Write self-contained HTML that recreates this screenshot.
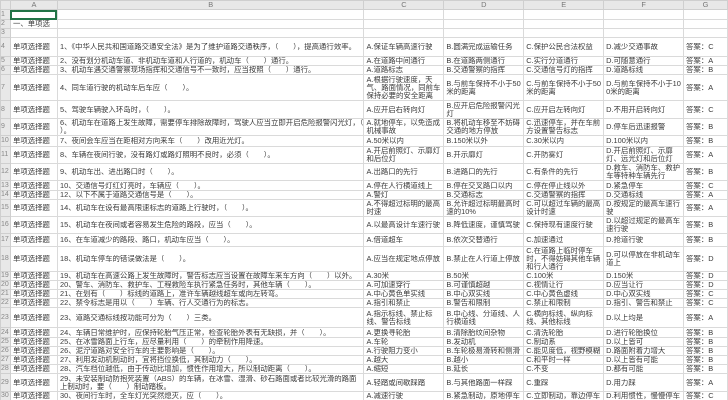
<!DOCTYPE html>
<html><head><meta charset="utf-8"><style>
html,body{margin:0;padding:0;background:#fff;width:728px;height:400px;overflow:hidden}
table{border-collapse:collapse;table-layout:fixed;font-family:"Liberation Sans","Noto Sans CJK SC",sans-serif;font-size:7.4px;line-height:8px;color:#3a3a3a}
td{border:1px solid #dadada;padding:0 0 0 2px;overflow:hidden;vertical-align:middle;word-break:break-all}
td>div{max-height:var(--h);overflow:hidden}
tr.hd td{background:#e8e8e8;color:#777;text-align:center;padding:0;border-color:#cfcfcf}
td.n{background:#e8e8e8;color:#888;padding:0;text-align:left;font-size:7px;border-color:#cfcfcf}
td.sel{outline:2px solid #217346;outline-offset:-2px}
</style></head><body>
<table>
<colgroup><col style="width:10px"><col style="width:47px"><col style="width:307px"><col style="width:80px"><col style="width:80px"><col style="width:80px"><col style="width:80px"><col style="width:44px"></colgroup>
<tr class="hd" style="height:9px;--h:8px"><td></td><td>A</td><td>B</td><td>C</td><td>D</td><td>E</td><td>F</td><td>G</td></tr>
<tr style="height:10px;--h:8px"><td class="n">1</td><td class="sel"></td><td></td><td></td><td></td><td></td><td></td><td></td></tr>
<tr style="height:8px;--h:8px"><td class="n">2</td><td style="white-space:nowrap">一、单项选</td><td></td><td></td><td></td><td></td><td></td><td></td></tr>
<tr style="height:7px;--h:6px"><td class="n">3</td><td></td><td></td><td></td><td></td><td></td><td></td><td></td></tr>
<tr style="height:19px;--h:17px"><td class="n">4</td><td><div>单项选择题</div></td><td><div>1、《中华人民共和国道路交通安全法》是为了维护道路交通秩序，（　　），提高通行效率。</div></td><td><div>A.保证车辆高速行驶</div></td><td><div>B.圆满完成运输任务</div></td><td><div>C.保护公民合法权益</div></td><td><div>D.减少交通事故</div></td><td><div>答案：C</div></td></tr>
<tr style="height:9px;--h:8px"><td class="n">5</td><td><div>单项选择题</div></td><td><div>2、没有划分机动车道、非机动车道和人行道的，机动车（　　）通行。</div></td><td><div>A.在道路中间通行</div></td><td><div>B.在道路两侧通行</div></td><td><div>C.实行分道通行</div></td><td><div>D.可随意通行</div></td><td><div>答案：A</div></td></tr>
<tr style="height:9px;--h:8px"><td class="n">6</td><td><div>单项选择题</div></td><td><div>3、机动车遇交通警察现场指挥和交通信号不一致时，应当按照（　　）通行。</div></td><td><div>A.道路标志</div></td><td><div>B.交通警察的指挥</div></td><td><div>C.交通信号灯的指挥</div></td><td><div>D.道路标线</div></td><td><div>答案：B</div></td></tr>
<tr style="height:26px;--h:24px"><td class="n">7</td><td><div>单项选择题</div></td><td><div>4、同车道行驶的机动车后车应（　　）。</div></td><td><div>A.根据行驶速度，天气、路面情况，同前车保持必要的安全距离</div></td><td><div>B.与前车保持不小于50米的距离</div></td><td><div>C.与前车保持不小于50米的距离</div></td><td><div>D.与前车保持不小于100米的距离</div></td><td><div>答案：A</div></td></tr>
<tr style="height:18px;--h:16px"><td class="n">8</td><td><div>单项选择题</div></td><td><div>5、驾驶车辆驶入环岛时，（　　）。</div></td><td><div>A.应开启右转向灯</div></td><td><div>B.应开启危险报警闪光灯</div></td><td><div>C.应开启左转向灯</div></td><td><div>D.不用开启转向灯</div></td><td><div>答案：C</div></td></tr>
<tr style="height:17px;--h:16px"><td class="n">9</td><td><div>单项选择题</div></td><td><div>6、机动车在道路上发生故障，需要停车排除故障时，驾驶人应当立即开启危险报警闪光灯，（　　）。</div></td><td><div>A.就地停车，以免造成机械事故</div></td><td><div>B.将机动车移至不妨碍交通的地方停放</div></td><td><div>C.迅速停车，并在车前方设置警告标志</div></td><td><div>D.停车后迅速报警</div></td><td><div>答案：B</div></td></tr>
<tr style="height:11px;--h:8px"><td class="n">10</td><td><div>单项选择题</div></td><td><div>7、夜间会车应当在距相对方向来车（　　）改用近光灯。</div></td><td><div>A.50米以内</div></td><td><div>B.150米以外</div></td><td><div>C.30米以内</div></td><td><div>D.100米以内</div></td><td><div>答案：B</div></td></tr>
<tr style="height:14px;--h:16px"><td class="n">11</td><td><div>单项选择题</div></td><td><div>8、车辆在夜间行驶，没有路灯或路灯照明不良时，必须（　　）。</div></td><td><div>A.开启前照灯、示廓灯和后位灯</div></td><td><div>B.开示廓灯</div></td><td><div>C.开防雾灯</div></td><td><div>D.开启前照灯、示廓灯、远光灯和后位灯</div></td><td><div>答案：A</div></td></tr>
<tr style="height:17px;--h:16px"><td class="n">12</td><td><div>单项选择题</div></td><td><div>9、机动车出、进出路口时（　　）。</div></td><td><div>A.出路口的先行</div></td><td><div>B.进路口的先行</div></td><td><div>C.有条件的先行</div></td><td><div>D.救车、消防车、救护车等特种车辆先行</div></td><td><div>答案：B</div></td></tr>
<tr style="height:10px;--h:8px"><td class="n">13</td><td><div>单项选择题</div></td><td><div>10、交通信号灯红灯亮时，车辆应（　　）。</div></td><td><div>A.停在人行横道线上</div></td><td><div>B.停在交叉路口以内</div></td><td><div>C.停在停止线以外</div></td><td><div>D.紧急停车</div></td><td><div>答案：C</div></td></tr>
<tr style="height:9px;--h:8px"><td class="n">14</td><td><div>单项选择题</div></td><td><div>12、以下不属于道路交通信号是（　　）。</div></td><td><div>A.警灯</div></td><td><div>B.交通标志</div></td><td><div>C.交通警察的指挥</div></td><td><div>D.交通标线</div></td><td><div>答案：A</div></td></tr>
<tr style="height:17px;--h:16px"><td class="n">15</td><td><div>单项选择题</div></td><td><div>14、机动车在设有最高限速标志的道路上行驶时，（　　）。</div></td><td><div>A.不得超过标明的最高时速</div></td><td><div>B.允许超过标明最高时速的10%</div></td><td><div>C.可以超过车辆的最高设计时速</div></td><td><div>D.按规定的最高车速行驶</div></td><td><div>答案：A</div></td></tr>
<tr style="height:17px;--h:16px"><td class="n">16</td><td><div>单项选择题</div></td><td><div>15、机动车在夜间或者容易发生危险的路段，应当（　　）。</div></td><td><div>A.以最高设计车速行驶</div></td><td><div>B.降低速度，谨慎驾驶</div></td><td><div>C.保持现有速度行驶</div></td><td><div>D.以超过规定的最高车速行驶</div></td><td><div>答案：B</div></td></tr>
<tr style="height:13px;--h:8px"><td class="n">17</td><td><div>单项选择题</div></td><td><div>16、在车道减少的路段、路口，机动车应当（　　）。</div></td><td><div>A.借道超车</div></td><td><div>B.依次交替通行</div></td><td><div>C.加速通过</div></td><td><div>D.抢道行驶</div></td><td><div>答案：B</div></td></tr>
<tr style="height:24px;--h:24px"><td class="n">18</td><td><div>单项选择题</div></td><td><div>18、机动车停车的错误做法是（　　）。</div></td><td><div>A.应当在规定地点停放</div></td><td><div>B.禁止在人行道上停放</div></td><td><div>C.在道路上临时停车时，不得妨碍其他车辆和行人通行</div></td><td><div>D.可以停放在非机动车道上</div></td><td><div>答案：D</div></td></tr>
<tr style="height:8px;--h:8px"><td class="n">19</td><td><div>单项选择题</div></td><td><div>19、机动车在高速公路上发生故障时，警告标志应当设置在故障车来车方向（　　）以外。</div></td><td><div>A.30米</div></td><td><div>B.50米</div></td><td><div>C.100米</div></td><td><div>D.150米</div></td><td><div>答案：D</div></td></tr>
<tr style="height:8px;--h:8px"><td class="n">20</td><td><div>单项选择题</div></td><td><div>20、警车、消防车、救护车、工程救险车执行紧急任务时，其他车辆（　　）。</div></td><td><div>A.可加速穿行</div></td><td><div>B.可谨慎超越</div></td><td><div>C.视情让行</div></td><td><div>D.应当让行</div></td><td><div>答案：D</div></td></tr>
<tr style="height:8px;--h:8px"><td class="n">21</td><td><div>单项选择题</div></td><td><div>21、在划有（　　）标线的道路上，准许车辆越线超车或向左转弯。</div></td><td><div>A.中心黄色单实线</div></td><td><div>B.中心双实线</div></td><td><div>C.中心黄色虚线</div></td><td><div>D.中心双实线</div></td><td><div>答案：C</div></td></tr>
<tr style="height:8px;--h:8px"><td class="n">22</td><td><div>单项选择题</div></td><td><div>22、禁令标志是用以（　　）车辆、行人交通行为的标志。</div></td><td><div>A.指引和禁止</div></td><td><div>B.警告和限制</div></td><td><div>C.禁止和限制</div></td><td><div>D.指引、警告和禁止</div></td><td><div>答案：C</div></td></tr>
<tr style="height:20px;--h:16px"><td class="n">23</td><td><div>单项选择题</div></td><td><div>23、道路交通标线按功能可分为（　　）三类。</div></td><td><div>A.指示标线、禁止标线、警告标线</div></td><td><div>B.中心线、分道线、人行横道线</div></td><td><div>C.横向标线、纵向标线、其他标线</div></td><td><div>D.以上均是</div></td><td><div>答案：A</div></td></tr>
<tr style="height:10px;--h:8px"><td class="n">24</td><td><div>单项选择题</div></td><td><div>24、车辆日常维护时，应保持轮胎气压正常，检查轮胎外表有无缺损，并（　　）。</div></td><td><div>A.更换寻轮胎</div></td><td><div>B.清除胎纹间杂物</div></td><td><div>C.清洗轮胎</div></td><td><div>D.进行轮胎换位</div></td><td><div>答案：B</div></td></tr>
<tr style="height:8px;--h:8px"><td class="n">25</td><td><div>单项选择题</div></td><td><div>25、在冰雪路面上行车，应尽量利用（　　）的牵制作用降速。</div></td><td><div>A.车轮</div></td><td><div>B.发动机</div></td><td><div>C.制动系</div></td><td><div>D.以上皆可</div></td><td><div>答案：B</div></td></tr>
<tr style="height:8px;--h:8px"><td class="n">26</td><td><div>单项选择题</div></td><td><div>26、泥泞道路对安全行车的主要影响是（　　）。</div></td><td><div>A.行驶阻力变小</div></td><td><div>B.车轮极易滑转和侧滑</div></td><td><div>C.能见度低，视野模糊</div></td><td><div>D.路面附着力增大</div></td><td><div>答案：B</div></td></tr>
<tr style="height:8px;--h:8px"><td class="n">27</td><td><div>单项选择题</div></td><td><div>27、利用发动机制动时，宜将挡位换低，其制动力（　　）。</div></td><td><div>A.越大</div></td><td><div>B.越小</div></td><td><div>C.和平时一样</div></td><td><div>D.以上皆有可能</div></td><td><div>答案：B</div></td></tr>
<tr style="height:8px;--h:8px"><td class="n">28</td><td><div>单项选择题</div></td><td><div>28、汽车档位越低，由于传动比增加，惯性作用增大，所以制动距离（　　）。</div></td><td><div>A.缩短</div></td><td><div>B.延长</div></td><td><div>C.不变</div></td><td><div>D.都有可能</div></td><td><div>答案：B</div></td></tr>
<tr style="height:18px;--h:16px"><td class="n">29</td><td><div>单项选择题</div></td><td><div>29、未安装制动防抱死装置（ABS）的车辆，在冰雪、湿滑、砂石路面或者比较光滑的路面上制动时，要（　　）制动踏板。</div></td><td><div>A.轻踏或间歇踩踏</div></td><td><div>B.与其他路面一样踩</div></td><td><div>C.重踩</div></td><td><div>D.用力踩</div></td><td><div>答案：A</div></td></tr>
<tr style="height:9px;--h:8px"><td class="n">30</td><td><div>单项选择题</div></td><td><div>30、夜间行车时，全车灯光突然熄灭，应（　　）。</div></td><td><div>A.减速行驶</div></td><td><div>B.紧急制动，原地停车</div></td><td><div>C.立即制动，靠边停车</div></td><td><div>D.利用惯性，慢慢停车</div></td><td><div>答案：C</div></td></tr>
<tr style="height:10px;--h:8px"><td class="n">31</td><td><div>单项选择题</div></td><td><div>31、如果汽车制动踏板（　　），则汽车会在行驶中突然抛锚。</div></td><td><div>A.间歇性踩动</div></td><td><div>B.快速踩一下再抬开</div></td><td><div>C.一直踩住不抬</div></td><td><div>D.以上都不对</div></td><td><div>答案：C</div></td></tr>
</table>
</body></html>
